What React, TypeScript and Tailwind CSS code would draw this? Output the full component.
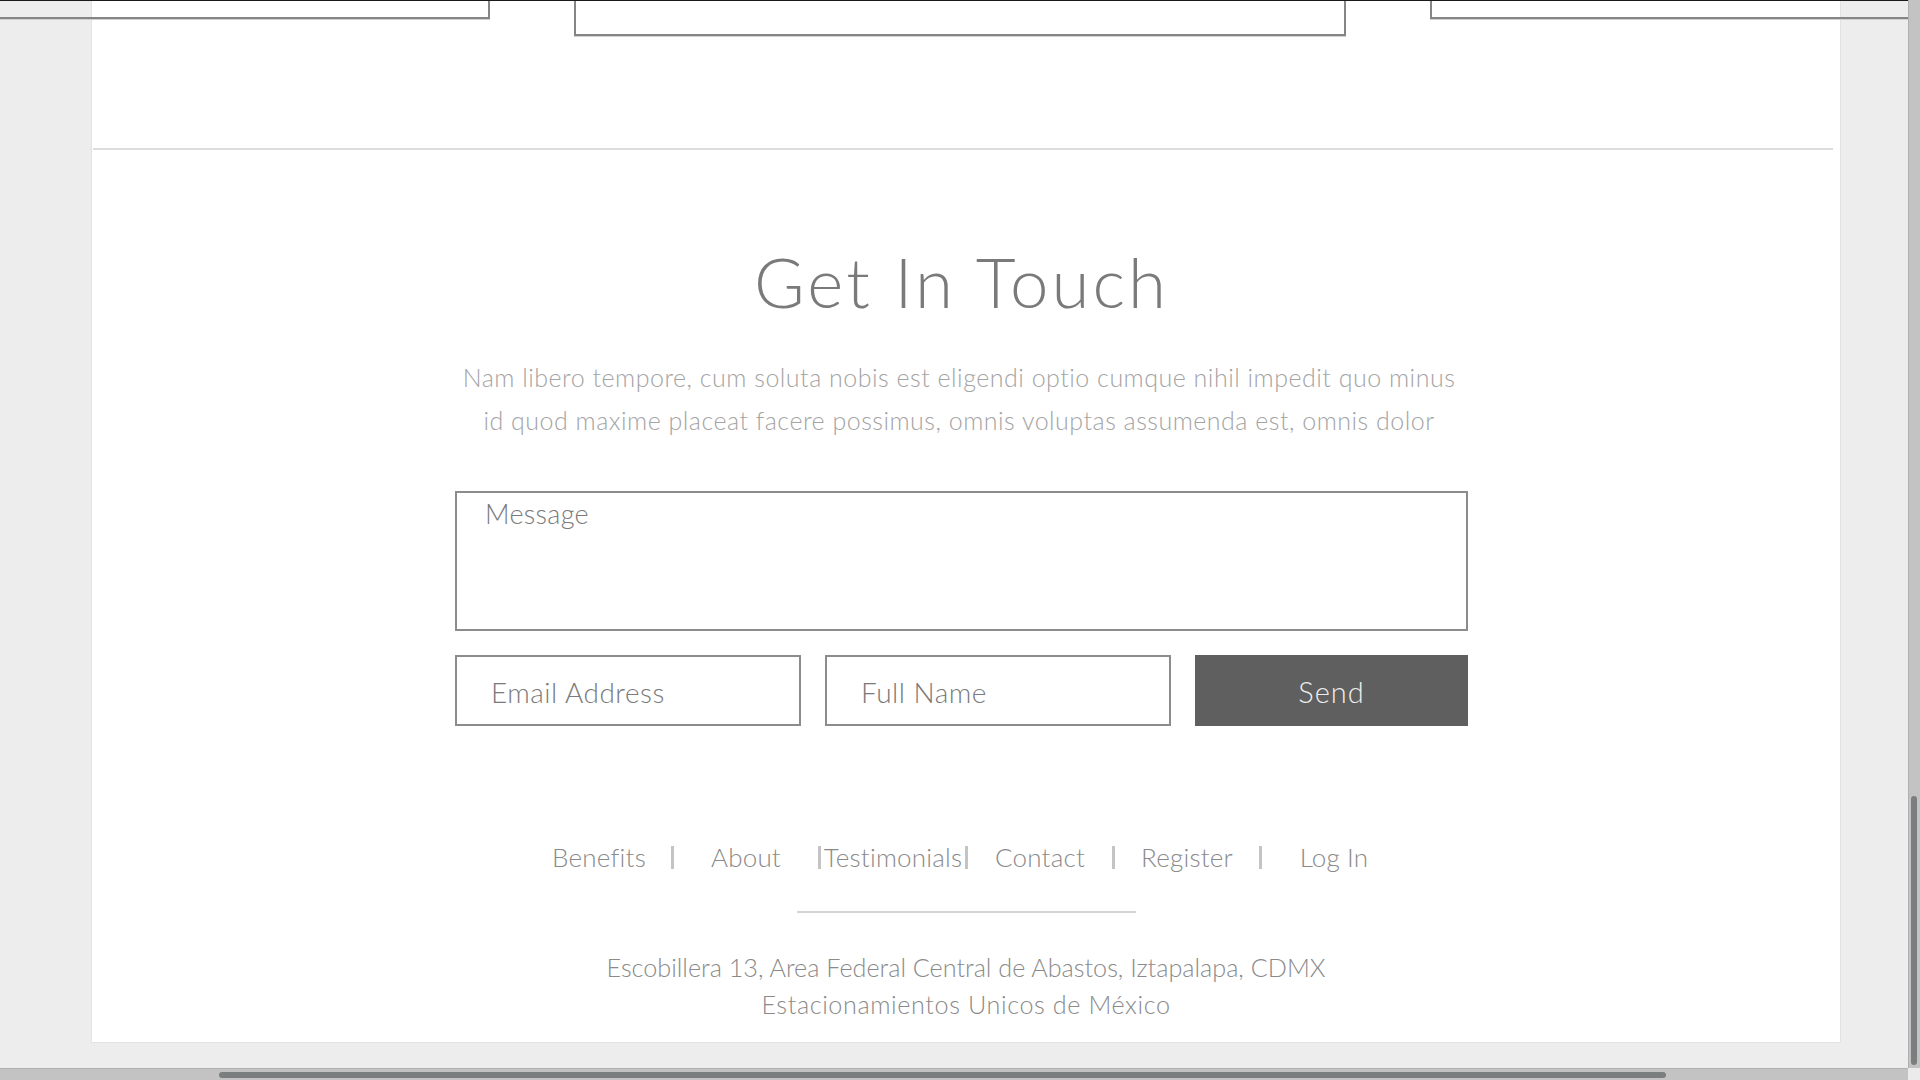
import { useState } from "react";

const navLinks = ["Benefits", "About", "Testimonials", "Contact", "Register", "Log In"];

const ContactSection = () => {
    const [message, setMessage] = useState("");
    const [email, setEmail] = useState("");
    const [name, setName] = useState("");

    return (
        <div className="flex flex-col items-center">
            <h2 className="mt-[92px] mr-[9px] text-[69px] leading-[80px] font-light tracking-[3px] text-[#7a7a7a] whitespace-nowrap">
                Get In Touch
            </h2>
            <p className="mt-[34px] mr-[14px] text-[25px] leading-[43px] font-light tracking-[0.5px] text-[#a4a4a4] text-center whitespace-nowrap">
                Nam libero tempore, cum soluta nobis est eligendi optio cumque nihil impedit quo minus
                <br />
                id quod maxime placeat facere possimus, omnis voluptas assumenda est, omnis dolor
            </p>
            <div className="mt-[49px] mr-[9px] w-[1013px] flex flex-col gap-[24px]">
                <textarea
                    value={message}
                    onChange={(e) => setMessage(e.target.value)}
                    placeholder="Message"
                    className="h-[140px] w-full resize-none border-2 border-[#8c8c8c] bg-white pl-[28px] pt-[5px] text-[27px] leading-[32px] font-light tracking-[0.3px] text-[#666] placeholder:text-[#7a7a7a] outline-none"
                />
                <div className="flex gap-[24px] h-[71px]">
                    <input
                        type="email"
                        value={email}
                        onChange={(e) => setEmail(e.target.value)}
                        placeholder="Email Address"
                        className="w-[346px] h-full border-2 border-[#8c8c8c] bg-white pl-[34px] pt-[2px] text-[28px] font-light tracking-[0.5px] text-[#666] placeholder:text-[#7a7a7a] outline-none"
                    />
                    <input
                        type="text"
                        value={name}
                        onChange={(e) => setName(e.target.value)}
                        placeholder="Full Name"
                        className="w-[346px] h-full border-2 border-[#8c8c8c] bg-white pl-[34px] pt-[2px] text-[28px] font-light tracking-[0.5px] text-[#666] placeholder:text-[#7a7a7a] outline-none"
                    />
                    <button className="w-[273px] h-full pt-[2px] bg-[#5f5f5f] text-[29px] font-light text-[#eeeeee] tracking-[1px]">
                        Send
                    </button>
                </div>
            </div>
        </div>
    );
};

const Footer = () => (
    <div className="flex flex-col items-center">
        <nav className="mt-[120px] self-start ml-[435px] flex">
            {navLinks.map((link, i) => (
                <a
                    key={link}
                    href="#"
                    className={
                        i < navLinks.length - 1
                            ? "w-[147px] h-[23px] border-r-[3px] border-[#c4c4c4] text-center text-[26px] leading-[23px] font-light tracking-[0.2px] text-[#8a8a8a] whitespace-nowrap"
                            : "w-[144px] h-[23px] text-center text-[26px] leading-[23px] font-light tracking-[0.2px] text-[#8a8a8a] whitespace-nowrap"
                    }
                >
                    {link}
                </a>
            ))}
        </nav>
        <div className="mt-[42px] w-[339px] h-[2px] bg-[#d4d4d4]" />
        <div className="mt-[36px] text-center text-[25.2px] leading-[37px] font-light text-[#8a8a8a] whitespace-nowrap">
            <p>Escobillera 13, Area Federal Central de Abastos, Iztapalapa, CDMX</p>
            <p className="tracking-[0.6px]">Estacionamientos Unicos de México</p>
        </div>
    </div>
);

export default function App() {
    return (
        <div
            className="w-[1920px] h-[1080px] flex bg-[#ededed] overflow-hidden"
            style={{ fontFamily: "Lato, 'Open Sans', sans-serif" }}
        >
            <div className="w-[1908px] flex flex-col">
                <div className="relative h-[1068px] overflow-hidden">
                    <div className="ml-[91px] w-[1750px] h-[1043px] bg-white border-x border-b border-[#e2e2e2] flex flex-col">
                        <div className="h-[148px]" />
                        <div className="h-[2px] ml-[1px] mr-[7px] bg-[#dcdcdc]" />
                        <ContactSection />
                        <Footer />
                    </div>
                    {/* cards from the section above, cut by the scroll position */}
                    <div className="absolute top-0 left-0 w-[1920px] h-[40px] border-t border-[#1a1a1a] flex justify-center items-start gap-[84px]">
                        <div className="shrink-0 w-[772px] h-[18px] border-x-2 border-b-2 border-[#858585] shadow-[0_1px_0_#d0d0d0]" />
                        <div className="shrink-0 w-[772px] h-[35px] border-x-2 border-b-2 border-[#858585] shadow-[0_1px_0_#d0d0d0]" />
                        <div className="shrink-0 w-[772px] h-[18px] border-x-2 border-b-2 border-[#858585] shadow-[0_1px_0_#d0d0d0]" />
                    </div>
                </div>
                <div className="h-[12px] bg-[#c2c3c2] border-t border-[#b0b0b0] flex items-center">
                    <div className="ml-[219px] w-[1447px] h-[6px] rounded-full bg-[#7b7e7e]" />
                </div>
            </div>
            <div className="w-[12px] flex flex-col">
                <div className="h-[1068px] bg-[#c2c3c2] border-l border-[#b0b0b0] flex flex-col">
                    <div className="mt-[796px] ml-[2px] w-[6px] h-[269px] rounded-full bg-[#7b7e7e]" />
                </div>
                <div className="h-[12px] bg-[#ebebeb]" />
            </div>
        </div>
    );
}
